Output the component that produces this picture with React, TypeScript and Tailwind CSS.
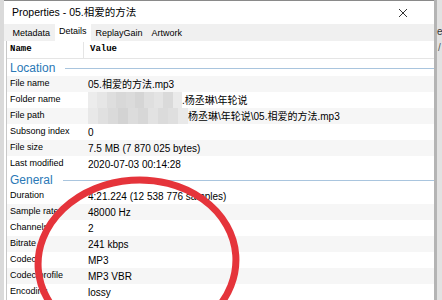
import React from 'react';

const rows: (
  | { group: string }
  | { label: string; value: React.ReactNode }
)[] = [
  { group: 'Location' },
  { label: 'File name', value: '05.相爱的方法.mp3' },
  { label: 'Folder name', value: 'folder' },
  { label: 'File path', value: 'path' },
  { label: 'Subsong index', value: '0' },
  { label: 'File size', value: '7.5 MB (7 870 025 bytes)' },
  { label: 'Last modified', value: '2020-07-03 00:14:28' },
  { group: 'General' },
  { label: 'Duration', value: '4:21.224 (12 538 776 samples)' },
  { label: 'Sample rate', value: '48000 Hz' },
  { label: 'Channels', value: '2' },
  { label: 'Bitrate', value: '241 kbps' },
  { label: 'Codec', value: 'MP3' },
  { label: 'Codec profile', value: 'MP3 VBR' },
  { label: 'Encoding', value: 'lossy' },
];

const mosaicA = ['#ececec', '#e6e6e6', '#dedede', '#d8d8d8', '#dbdbdb', '#d5d5d5', '#dfdfdf', '#e4e4e4', '#dadada', '#eaeaea'];
const mosaicB = ['#e8e8e8', '#e0e0e0', '#dadada', '#d3d3d3', '#dcdcdc', '#d7d7d7', '#e2e2e2', '#dbdbdb', '#dfdfdf', '#e9e9e9'];

const Mosaic = ({ colors, width }: { colors: string[]; width: number }) => (
  <div className="flex h-[16px] shrink-0" style={{ width }}>
    {colors.map((c, i) => (
      <div key={i} className="h-full flex-1" style={{ backgroundColor: c }} />
    ))}
  </div>
);

const renderValue = (v: React.ReactNode) => {
  if (v === 'folder') {
    return (
      <div className="flex items-center">
        <Mosaic colors={mosaicA} width={94} />
        <span>.杨丞琳\年轮说</span>
      </div>
    );
  }
  if (v === 'path') {
    return (
      <div className="flex items-center">
        <Mosaic colors={mosaicB} width={100} />
        <span>杨丞琳\年轮说\05.相爱的方法.mp3</span>
      </div>
    );
  }
  return <span>{v}</span>;
};

export default function App() {
  return (
    <div className="relative flex h-[300px] w-[442px] overflow-hidden bg-[#d9d9d9] font-['Liberation_Sans','Noto_Sans_CJK_SC',sans-serif] text-black">
      <div className="w-[4px] shrink-0 bg-[#dadada]" />

      {/* window */}
      <div className="flex w-[430px] shrink-0 flex-col border-t border-[#8a8a8a] bg-white">
        <div className="flex h-[23px] shrink-0 items-center justify-between pl-[8px] pr-[26px]">
          <span className="text-[10.5px] leading-none">Properties - 05.相爱的方法</span>
          <svg width="10" height="10" viewBox="0 0 10 10" className="text-[#333]">
            <path d="M1 1 L9 9 M9 1 L1 9" stroke="currentColor" strokeWidth="1" />
          </svg>
        </div>

        {/* tabs */}
        <div className="flex h-[17px] shrink-0 items-end bg-[#f0f0f0] pl-[4px] text-[9px]">
          <div className="flex h-[15px] items-center px-[4.5px]">Metadata</div>
          <div className="-mt-[2px] flex h-[18px] items-center bg-white px-[4.5px]">Details</div>
          <div className="flex h-[15px] items-center px-[4.5px]">ReplayGain</div>
          <div className="flex h-[15px] items-center px-[4.5px]">Artwork</div>
        </div>

        {/* list */}
        <div className="ml-[2px] flex flex-1 flex-col border-l border-[#c8c8c8]">
          <div className="flex h-[18px] shrink-0 items-center border-b border-[#e5e5e5] pt-[1px] font-['Liberation_Mono',monospace] text-[9px] font-bold">
            <div className="flex h-full w-[77px] items-center border-r border-[#e5e5e5] pl-[3px]">Name</div>
            <div className="pl-[6px]">Value</div>
          </div>
          <div className="h-[1px] shrink-0" />
          {rows.map((r, i) =>
            'group' in r ? (
              <div key={i} className="flex h-[16px] shrink-0 items-center pl-[3px]">
                <span className="text-[12px] leading-none text-[#2a78b6]">{r.group}</span>
                <div className="ml-[10px] h-px flex-1 bg-[#a9c5de]" />
              </div>
            ) : (
              <div
                key={i}
                className={`flex h-[16px] shrink-0 items-center text-[9px] ${i % 2 === 1 ? 'bg-[#f6f6f6]' : 'bg-white'}`}
              >
                <div className="w-[77px] shrink-0 pl-[3px]">{r.label}</div>
                <div className="pl-[4px] text-[10px]">{renderValue(r.value)}</div>
              </div>
            )
          )}
        </div>
      </div>

      {/* right edge / desktop */}
      <div className="w-[3px] shrink-0 bg-[#b4b4b4]" />
      <div className="relative flex-1 bg-[#e2e2e2]">
        <span className="absolute left-[0px] top-[24px] text-[10px] text-[#333]">e</span>
        <span className="absolute left-[1px] top-[40px] text-[10px] text-[#555]">/</span>
      </div>

      {/* red annotation */}
      <svg className="pointer-events-none absolute left-0 top-0" width="442" height="300" viewBox="0 0 442 300">
        <ellipse cx="137" cy="262" rx="99" ry="82" fill="none" stroke="#e5343b" strokeWidth="7" transform="rotate(-4 137 262)" />
      </svg>
    </div>
  );
}
